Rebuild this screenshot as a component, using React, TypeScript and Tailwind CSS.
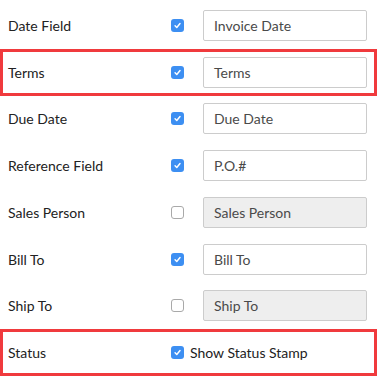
type Row = {
  label: string;
  checked: boolean;
  value: string;
  disabled?: boolean;
  highlight?: boolean;
  inline?: boolean;
};

const rows: Row[] = [
  { label: "Date Field", checked: true, value: "Invoice Date" },
  { label: "Terms", checked: true, value: "Terms", highlight: true },
  { label: "Due Date", checked: true, value: "Due Date" },
  { label: "Reference Field", checked: true, value: "P.O.#" },
  { label: "Sales Person", checked: false, value: "Sales Person", disabled: true },
  { label: "Bill To", checked: true, value: "Bill To" },
  { label: "Ship To", checked: false, value: "Ship To", disabled: true },
  { label: "Status", checked: true, value: "Show Status Stamp", highlight: true, inline: true },
];

const Checkbox = ({ checked }: { checked: boolean }) =>
  checked ? (
    <span className="flex h-[13px] w-[13px] shrink-0 items-center justify-center rounded-[3px] bg-[#3d8ff2]">
      <svg width="9" height="9" viewBox="0 0 10 10" fill="none">
        <path d="M2.3 5.4 4.2 7.3 7.8 2.8" stroke="white" strokeWidth="1.6" strokeLinecap="round" strokeLinejoin="round" />
      </svg>
    </span>
  ) : (
    <span className="h-[13px] w-[13px] shrink-0 rounded-[3px] border border-[#a9a9a9] bg-white" />
  );

export default function App() {
  return (
    <div
      className="h-[386px] w-[378px] bg-white pt-[2px] text-[14px] text-[#222]"
      style={{ fontFamily: "Lato, 'Open Sans', sans-serif" }}
    >
      {rows.map((row) => (
        <div
          key={row.label}
          className={`flex h-[46.75px] w-[377px] items-center border-[3px] pl-[5px] ${
            row.highlight ? "border-[#f03a3d]" : "border-transparent"
          }`}
        >
          <div className="w-[163px] shrink-0">{row.label}</div>
          <Checkbox checked={row.checked} />
          {row.inline ? (
            <span className="ml-[6px]">{row.value}</span>
          ) : (
            <div
              className={`ml-[19px] flex h-[31px] w-[164px] items-center rounded-[2px] border border-[#cccccc] px-[10px] text-[#4a4a4a] ${
                row.disabled ? "bg-[#eeeeee]" : "bg-white"
              }`}
            >
              {row.value}
            </div>
          )}
        </div>
      ))}
    </div>
  );
}
